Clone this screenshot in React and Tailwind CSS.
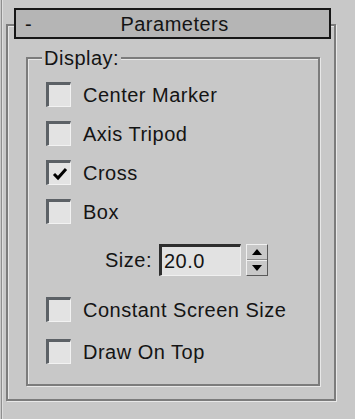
import React from 'react';

const items = [
  { label: 'Center Marker', checked: false },
  { label: 'Axis Tripod', checked: false },
  { label: 'Cross', checked: true },
  { label: 'Box', checked: false },
];

const Check = ({ checked }) => (
  <div className="flex h-[25px] w-[25px] shrink-0 items-center justify-center border-t-[3px] border-l-[3px] border-r border-b border-t-[#5c6166] border-l-[#5c6166] border-r-[#f2f2f2] border-b-[#f2f2f2] bg-[#e3e3e3]">
    {checked && (
      <svg width="16" height="16" viewBox="0 0 16 16">
        <polyline points="2,8 6,12 14,3" fill="none" stroke="#000" strokeWidth="3" />
      </svg>
    )}
  </div>
);

const Row = ({ label, checked, className = '' }) => (
  <div className={`flex h-[25px] items-center gap-[12px] ${className}`}>
    <Check checked={checked} />
    <span>{label}</span>
  </div>
);

const App = () => {
  return (
    <div
      className="flex h-[419px] w-[355px] overflow-hidden bg-[#c8c8c8] text-[20px] leading-[20px] tracking-[0.5px] text-[#141414]"
      style={{ fontFamily: '"Liberation Sans", Arial, sans-serif' }}
    >
      {/* left edge of the panel */}
      <div className="ml-px w-px bg-[#8e8e8e]" />
      <div className="w-px bg-[#dedede]" />

      {/* rollout */}
      <div className="ml-[3px] mt-[24px] h-[377px] w-[330px] border-2 border-[#7c7c7c] shadow-[1px_1px_0_#e8e8e8,inset_1px_1px_0_#e8e8e8]">
        <div className="-mt-[18px] ml-[6px] flex h-[31px] w-[317px] items-center border-2 border-[#161616] bg-[#b5b5b5]">
          <span className="pl-[9px]">-</span>
          <span className="flex-1 pr-[12px] text-center">Parameters</span>
        </div>

        {/* Display group */}
        <div className="relative ml-[18px] mt-[18px] h-[329px] w-[294px] border-2 border-[#7c7c7c] shadow-[1px_1px_0_#e8e8e8,inset_1px_1px_0_#e8e8e8]">
          <span className="absolute left-[14px] top-[-11px] bg-[#c8c8c8] px-[2px]">Display:</span>

          <div className="flex flex-col pl-[18px] pt-[23px]">
            <div className="flex flex-col gap-[14px]">
              {items.map((it) => (
                <Row key={it.label} label={it.label} checked={it.checked} />
              ))}
            </div>

            <div className="mt-[20px] flex h-[32px] items-center pl-[59px]">
              <span className="mr-[7px]">Size:</span>
              <div className="flex h-[32px] w-[82px] items-center border-t-[3px] border-l-[3px] border-r border-b border-t-[#2e2e2e] border-l-[#2e2e2e] border-r-[#f0f0f0] border-b-[#f0f0f0] bg-[#e2e2e2] pl-[2px]">
                20.0
              </div>
              <div className="ml-[5px] flex h-[32px] w-[22px] flex-col border border-t-[#f0f0f0] border-l-[#f0f0f0] border-r-[#5a5a5a] border-b-[#5a5a5a] bg-[#c8c8c8]">
                <div className="flex flex-1 items-center justify-center border-b border-b-[#8a8a8a]">
                  <svg width="10" height="6" viewBox="0 0 10 6">
                    <polygon points="5,0 10,6 0,6" fill="#000" />
                  </svg>
                </div>
                <div className="flex flex-1 items-center justify-center border-t border-t-[#efefef]">
                  <svg width="10" height="6" viewBox="0 0 10 6">
                    <polygon points="0,0 10,0 5,6" fill="#000" />
                  </svg>
                </div>
              </div>
            </div>

            <Row className="mt-[21px]" label="Constant Screen Size" checked={false} />
            <Row className="mt-[17px]" label="Draw On Top" checked={false} />
          </div>
        </div>
      </div>
    </div>
  );
};

export default App;
